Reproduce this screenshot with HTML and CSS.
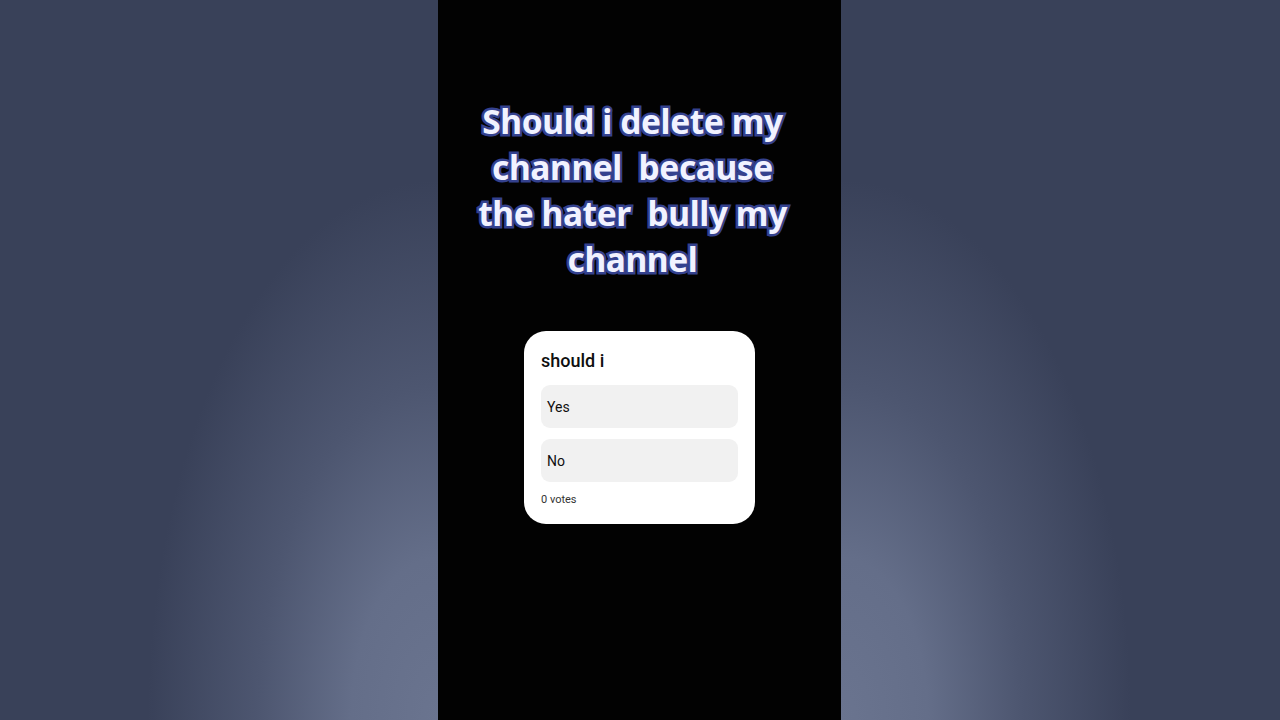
FILE: index.html
```html
<!DOCTYPE html>
<html>
<head>
<meta charset="utf-8">
<link rel="stylesheet" href="styles.css">
</head>
<body>
<div class="stage">
  <div class="side side-left"></div>
  <main class="phone">
    <h1 class="caption">Should i delete my<br>channel&nbsp; because<br>the hater&nbsp; bully my<br>channel</h1>
    <section class="poll">
      <h2 class="poll-title">should i</h2>
      <div class="option">Yes</div>
      <div class="option">No</div>
      <div class="votes">0 votes</div>
    </section>
  </main>
  <div class="side side-right"></div>
</div>
</body>
</html>
```
FILE: styles.css
```css
html, body {
  margin: 0;
  padding: 0;
  width: 1280px;
  height: 720px;
  overflow: hidden;
  background: #394159;
}
.stage {
  display: flex;
  width: 1280px;
  height: 720px;
}
.side {
  height: 720px;
}
.side-left {
  width: 438px;
  flex: none;
  background:
    radial-gradient(ellipse 290px 540px at 100% 100%, #6a748f 0%, #646e89 30%, #4d5670 62%, rgba(57,65,89,0) 100%),
    #394159;
}
.side-right {
  flex: 1;
  background:
    radial-gradient(ellipse 290px 540px at 0% 100%, #6a748f 0%, #646e89 30%, #4d5670 62%, rgba(57,65,89,0) 100%),
    #394159;
}
.phone {
  width: 403px;
  flex: none;
  height: 720px;
  background: #020202;
  display: flex;
  flex-direction: column;
  align-items: center;
}
.caption {
  margin: 98px 14px 0 0;
  font-family: "Noto Sans", "Open Sans", sans-serif;
  font-weight: 700;
  font-size: 33.5px;
  line-height: 46px;
  letter-spacing: -0.4px;
  text-align: center;
  color: #f1f2ff;
  -webkit-text-stroke: 5px #34418e;
  paint-order: stroke fill;
}
.poll {
  margin-top: 49px;
  width: 231px;
  box-sizing: border-box;
  background: #ffffff;
  border-radius: 22px;
  padding: 19px 17px 17px 17px;
  font-family: Roboto, "Liberation Sans", sans-serif;
  color: #0f0f0f;
}
.poll-title {
  margin: 0 0 13px 0;
  font-size: 18px;
  font-weight: 500;
  line-height: 22px;
}
.option {
  height: 43px;
  background: #f1f1f1;
  border-radius: 9px;
  display: flex;
  align-items: center;
  padding-left: 6px;
  font-size: 14px;
  margin-bottom: 11px;
}
.votes {
  margin-top: 3px;
  font-size: 11px;
  line-height: 14px;
  color: #333333;
}
```
